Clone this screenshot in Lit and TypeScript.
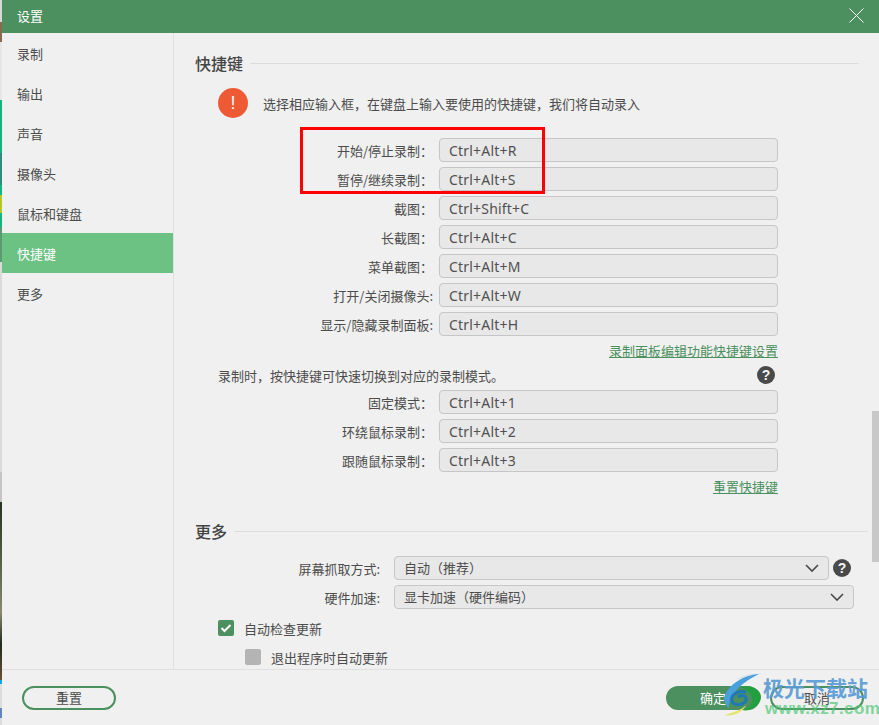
import { LitElement, html, css } from "lit";
import { customElement } from "lit/decorators.js";

const nav = ["录制", "输出", "声音", "摄像头", "鼠标和键盘", "快捷键", "更多"];
const rows1 = [
  ["开始/停止录制：", "Ctrl+Alt+R"],
  ["暂停/继续录制：", "Ctrl+Alt+S"],
  ["截图：", "Ctrl+Shift+C"],
  ["长截图：", "Ctrl+Alt+C"],
  ["菜单截图：", "Ctrl+Alt+M"],
  ["打开/关闭摄像头:", "Ctrl+Alt+W"],
  ["显示/隐藏录制面板:", "Ctrl+Alt+H"],
];
const rows2 = [
  ["固定模式：", "Ctrl+Alt+1"],
  ["环绕鼠标录制：", "Ctrl+Alt+2"],
  ["跟随鼠标录制：", "Ctrl+Alt+3"],
];

const chevron = html`<svg class="chev" viewBox="0 0 14 9"><path d="M1 1l6 6 6-6" fill="none" stroke="#4a4a4a" stroke-width="1.6"/></svg>`;
const help = html`<span class="help">?</span>`;

const strip: [number, string][] = [
  [22, "#d8d8d8"], [20, "#8a6a4a"], [58, "#e6e6e6"], [53, "#12b57f"], [32, "#2f8a80"], [10, "#12b57f"],
  [18, "#b5c822"], [14, "#12b57f"], [35, "#5c9a74"], [210, "#dadada"], [30, "#c4c4c4"],
  [178, "linear-gradient(#24331f,#5d6d4c 40%,#8a8a68 62%,#1f2c1c 80%,#6a5030)"],
  [4, "#12a5e8"], [24, "#dcdcdc"], [10, "#5f86c0"], [7, "#dcdcdc"],
];

@customElement("app-root")
export class AppRoot extends LitElement {
  static styles = css`
    :host {
      display: flex;
      position: relative;
      width: 879px;
      height: 725px;
      overflow: hidden;
      font-family: "Noto Sans CJK SC", "Liberation Sans", sans-serif;
      font-size: 13px;
      color: #4c4c4c;
      background: #f0f0f0;
    }
    .strip { width: 2px; flex: none; display: flex; flex-direction: column; }
    .strip i { display: block; flex: none; }
    .dialog { flex: 1; min-width: 0; display: flex; flex-direction: column; }
    .title {
      height: 33px; flex: none; background: #4b905e; color: #fff;
      display: flex; align-items: center; justify-content: space-between;
      padding: 0 15px 2px 15px; box-sizing: border-box;
    }
    .title svg { width: 15px; height: 15px; display: block; }
    .body { flex: 1; min-height: 0; display: flex; }
    .side { width: 171px; flex: none; border-right: 1px solid #e0e0e0; }
    .item { height: 40px; line-height: 42px; padding-left: 15px; }
    .item.on { background: #6cc283; color: #fff; }
    .main { flex: 1; min-width: 0; position: relative; overflow: hidden; padding: 18px 0 0 21px; }
    .head { display: flex; align-items: center; gap: 7px; height: 24px; font-size: 16px; font-weight: 500; color: #444; }
    .head b { font-weight: 500; }
    .head i { flex: 1; height: 1px; background: #dcdcdc; }
    .head.h1 { margin-right: 20px; }
    .head.h2 { margin-right: 11px; margin-top: 22px; }
    .tip { display: flex; align-items: center; gap: 15px; margin: 13px 0 0 23px; height: 30px; }
    .bang { width: 30px; height: 30px; border-radius: 50%; background: #ee5a33; color: #fff; display: flex; align-items: center; justify-content: center; font-size: 18px; font-family: "Liberation Sans", sans-serif; flex: none; }
    .rows { display: flex; flex-direction: column; gap: 5px; width: 583px; }
    .rows.a { margin-top: 20px; }
    .rows.b { margin-top: 3px; }
    .row { display: flex; align-items: center; gap: 6px; height: 24px; }
    .lab { width: 238px; text-align: right; flex: none; white-space: nowrap; }
    .inp {
      flex: 1; height: 24px; box-sizing: border-box; border: 1px solid #c6c6c6; border-radius: 4px;
      background: #e8e8e8; padding-left: 9px; line-height: 24px; font-family: "Noto Sans", "Noto Sans CJK SC", sans-serif;
      font-size: 14px; letter-spacing: .2px; color: #505050;
    }
    .link { color: #4b905e; text-decoration: underline; text-align: right; width: 583px; height: 20px; line-height: 20px; white-space: nowrap; margin-top: 5px; }
    .note { display: flex; align-items: center; justify-content: space-between; width: 557px; margin-left: 23px; height: 24px; margin-top: 2px; }
    .help { width: 18px; height: 18px; border-radius: 50%; background: #4a4a4a; color: #f4f4f4; display: inline-flex; align-items: center; justify-content: center; font: bold 14px "Liberation Sans", sans-serif; flex: none; }
    .more { display: flex; flex-direction: column; gap: 5px; margin-top: 13px; }
    .mrow { display: flex; align-items: center; height: 24px; }
    .mrow .lab { width: 185px; margin-right: 14px; }
    .sel { box-sizing: border-box; height: 24px; border: 1px solid #c6c6c6; border-radius: 4px; background: #e8e8e8; padding: 0 9px; display: flex; align-items: center; justify-content: space-between; line-height: 22px; }
    .sel.s1 { width: 435px; }
    .sel.s2 { width: 460px; }
    .chev { width: 14px; height: 9px; display: block; }
    .s1 + .help { margin-left: 4px; }
    .check { display: flex; align-items: center; gap: 10px; height: 24px; margin-left: 23px; }
    .check.c1 { margin-top: 7px; }
    .check.c2 { margin-left: 50px; margin-top: 5px; }
    .box { width: 16px; height: 16px; border-radius: 2px; background: #4b905e; flex: none; display: flex; align-items: center; justify-content: center; }
    .box.off { background: #b4b4b4; }
    .box svg { width: 12px; height: 10px; display: block; }
    .scroll { position: absolute; right: 0; top: 378px; width: 7px; height: 151px; background: #c8c8c8; }
    .foot { height: 56px; flex: none; border-top: 1px solid #e0e0e0; box-sizing: border-box; display: flex; align-items: flex-start; padding: 16px 15px 0 20px; }
    .btn { box-sizing: border-box; width: 94px; height: 24px; border: 2px solid #4b905e; border-radius: 12px; text-align: center; line-height: 20px; background: transparent; }
    .btn.ok { background: #4b905e; color: #fff; margin-left: auto; margin-right: 10px; }
    .frame { position: absolute; left: 300px; top: 127px; width: 245px; height: 67px; box-sizing: border-box; border: 3px solid #ff0000; pointer-events: none; }
    .wm { position: absolute; left: 716px; top: 670px; width: 163px; height: 55px; pointer-events: none; }
    .wm svg { position: absolute; left: 0; top: 0; width: 60px; height: 50px; }
    .wm .t { position: absolute; left: 47px; top: 4px; font: 700 21px/26px "Noto Sans CJK SC", sans-serif; color: #5b9bd5; opacity: .92; white-space: nowrap; }
    .wm .u { position: absolute; left: 49px; top: 29px; font: 700 17px/20px "Liberation Sans", sans-serif; color: #50c878; opacity: .7; white-space: nowrap; letter-spacing: .4px; }
  `;

  render() {
    return html`
      <div class="strip">
        ${strip.map(([h, c]) => html`<i style="height:${h}px;background:${c}"></i>`)}
      </div>
      <div class="dialog">
        <div class="title">
          <span>设置</span>
          <svg viewBox="0 0 15 15"><path d="M.5.5l14 14M14.5.5l-14 14" stroke="#fff" stroke-width="1" fill="none"/></svg>
        </div>
        <div class="body">
          <div class="side">
            ${nav.map((n) => html`<div class="item ${n === "快捷键" ? "on" : ""}">${n}</div>`)}
          </div>
          <div class="main">
            <div class="head h1"><b>快捷键</b><i></i></div>
            <div class="tip"><span class="bang">!</span><span>选择相应输入框，在键盘上输入要使用的快捷键，我们将自动录入</span></div>
            <div class="rows a">
              ${rows1.map(([l, v]) => html`<div class="row"><span class="lab">${l}</span><div class="inp">${v}</div></div>`)}
            </div>
            <div class="link">录制面板编辑功能快捷键设置</div>
            <div class="note"><span>录制时，按快捷键可快速切换到对应的录制模式。</span>${help}</div>
            <div class="rows b">
              ${rows2.map(([l, v]) => html`<div class="row"><span class="lab">${l}</span><div class="inp">${v}</div></div>`)}
            </div>
            <div class="link">重置快捷键</div>
            <div class="head h2"><b>更多</b><i></i></div>
            <div class="more">
              <div class="mrow"><span class="lab">屏幕抓取方式:</span><div class="sel s1">自动（推荐）${chevron}</div>${help}</div>
              <div class="mrow"><span class="lab">硬件加速:</span><div class="sel s2">显卡加速（硬件编码）${chevron}</div></div>
            </div>
            <div class="check c1"><span class="box"><svg viewBox="0 0 12 10"><path d="M1.5 5l3 3 6-6" fill="none" stroke="#fff" stroke-width="2"/></svg></span>自动检查更新</div>
            <div class="check c2"><span class="box off"></span>退出程序时自动更新</div>
            <div class="scroll"></div>
          </div>
        </div>
        <div class="foot">
          <div class="btn">重置</div>
          <div class="btn ok">确定</div>
          <div class="btn">取消</div>
        </div>
      </div>
      <div class="frame"></div>
      <div class="wm">
        <svg viewBox="0 0 60 50">
          <path d="M46 4C36 3 26 6 20 10 28 7 36 5 46 4z" fill="#d4dfe6"/>
          <path d="M43 4C28 5 12 14 8 28c0 4 2 8 5 10C12 28 22 14 43 4z" fill="#4aa0dc"/>
          <path d="M24 17c12-3 22 3 21 11-1 8-11 14-19 12 8-2 12-8 10-13-2-6-8-9-12-10z" fill="#22a040"/>
          <path d="M30 22c-8-2-16 3-14 9 2 5 12 5 14-1 1-4-4-6-8-3" fill="none" stroke="#1f78b4" stroke-width="3"/>
          <path d="M8 45c8-2 18-5 22-10-2 6-12 12-22 10z" fill="#e4e46a"/>
        </svg>
        <span class="t">极光下载站</span>
        <span class="u">www.xz7.com</span>
      </div>
    `;
  }
}
